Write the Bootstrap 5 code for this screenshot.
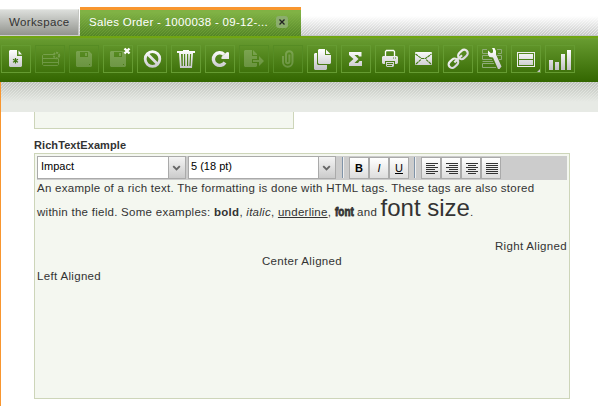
<!DOCTYPE html>
<html lang="en">
<head>
<meta charset="utf-8">
<title>Sales Order</title>
<link href="https://cdn.jsdelivr.net/npm/bootstrap@5.3.0/dist/css/bootstrap.min.css" rel="stylesheet">
<style>
body{font:11.5px/15px "Liberation Sans",Arial,sans-serif;color:#333;background:#fff;height:406px;overflow:hidden}
.tabstrip{height:36px;padding-top:7px;background:linear-gradient(#fff 16px,rgba(255,255,255,.1) 36px),repeating-linear-gradient(135deg,#bfc1bf 0 1px,#dededf 1px 2.12px);border-bottom:1px solid #c2c5c6}
.tab-plain{width:79px;height:27px;margin-top:2px;padding:5px 0 0 9px;background:linear-gradient(#dcdedb,#92948e);border-top:1px solid #e8eae7;border-right:1px solid #c5c7c2;border-bottom:1px solid #ccc;letter-spacing:.37px;color:#333}
.tab-live{width:221px;height:29px;margin-left:1px;padding:5px 0 0 9px;color:#fff;border-top:3px solid #f8962f;background:linear-gradient(rgba(128,178,69,1) 10%,rgba(88,135,40,.55)),repeating-linear-gradient(135deg,#4f8324 0 1px,#76a83c 1px 2.12px);letter-spacing:.29px}
.tab-x{width:12px;height:12px;margin:1px 0 0 8px;background:#8cae6d;border-radius:3px}
.toolstrip{height:46px;padding:7px 0 0 1px;gap:4px;border-top:2px solid #70a512;background:linear-gradient(#70a32f 0,#669a2f 2px,#336600 100%)}
.tool{width:30px;height:28px;border:1px solid #659b31;background:none;padding:0;flex:none;display:block}
.tool svg{display:block}
.off{border-color:#568c24}
.off svg{opacity:.2}
.haze{height:30px;background:linear-gradient(rgba(231,234,229,.1),#e7eae5 20px),repeating-linear-gradient(135deg,#b9bdb6 0 1px,#d9dbd6 1px 2.12px)}
.pane{height:324px;border-left:1px solid #f8962f}
.main{padding-left:33px}
.upper{width:260px;height:17px;border:1px solid #cdd5b9;border-top:0;background:#f4f7f0}
.lbl{font-size:11px;font-weight:bold;line-height:14px;margin-top:9px;height:15px;letter-spacing:.08px}
.editor{width:536px;height:246px;border:1px solid #cdd5b9;background:#f4f7f0;padding:2px}
.fmt{height:24px;margin-bottom:1px;background:#ccc;color:#000;font-size:11px}
.pick{height:23px;border:1px solid #aaa;background:#fff;padding-left:3px;line-height:19px}
.pick svg{background:linear-gradient(#f4f4f4,#cbcbcb);border-left:1px solid #aaa}
.pick-font{width:149px}
.pick-size{width:148px;margin-left:2px;padding-left:2px}
.bar-sep{width:2px;height:21px;margin:1px 5px 0;background:linear-gradient(90deg,#7f93a8 50%,#eee 50%)}
.pick-size + .bar-sep{margin-left:6px}
.fb{width:20px;height:22px;border:1px solid #aaa;background:linear-gradient(#fff,#ddd);padding:0;font-size:11px;line-height:20px;text-align:center;color:#000;margin-top:1px}
.l1{height:15px;line-height:15px;letter-spacing:.275px}
.l2{height:28px;line-height:23px;letter-spacing:.27px}
.place{letter-spacing:.33px}
.big{font-size:24px;letter-spacing:0}
.imp{display:inline-block;font-size:12px;font-weight:bold;transform:scaleX(.83);transform-origin:0 50%;width:19px;letter-spacing:0;-webkit-text-stroke:.8px #333}
</style>
<script src="https://cdn.jsdelivr.net/npm/bootstrap@5.3.0/dist/js/bootstrap.bundle.min.js"></script>
</head>
<body>
<svg width="0" height="0" class="position-absolute"><defs><linearGradient id="g" gradientUnits="userSpaceOnUse" x1="0" y1="5" x2="0" y2="24"><stop stop-color="#fff"/><stop offset="1" stop-color="#c4c4c8"/></linearGradient></defs></svg>
<header class="tabstrip d-flex text-nowrap">
<div class="tab-plain">Workspace</div>
<div class="tab-live d-flex"><span class="tabname">Sales Order - 1000038 - 09-12-...</span><svg class="tab-x" viewBox="0 0 12 12"><path d="M3.500 3.500l5 5m0-5l-5 5" stroke="#222" stroke-width="1.300"/></svg></div>
</header>
<nav class="toolstrip d-flex">
<button class="tool"><svg width="28" height="26" viewBox="1 1 28 26"><path d="M9 5h7v6h5v10l-1 1H9l-1-1V6zM17.500 5.500L21 9.500h-3.500z" fill="url(#g)"/><path d="M14.500 13v5.500M12 14.300l5 3M17 14.300l-5 3" stroke="#3f7610" stroke-width="1.200"/></svg></button>
<button class="tool off"><svg width="28" height="26" viewBox="1 1 28 26" fill="none" stroke="#fff"><path d="M19 9.500H8.500L7.500 10.500v9l1 1h14l1-1V14M7.500 13.500h16M7.500 17.500h16"/><circle cx="21.500" cy="10.500" r="2.700" stroke-dasharray="2 1" stroke-width="2"/></svg></button>
<button class="tool off"><svg width="28" height="26" viewBox="1 1 28 26"><path fill-rule="evenodd" d="M8 6h12l3 3v12l-1 1H8l-1-1V7zM11 7v5h8V7zM16 8h2v3h-2zM20 19v1h1v-1z" fill="#fff"/></svg></button>
<button class="tool"><svg width="28" height="26" viewBox="1 1 28 26"><path fill-rule="evenodd" opacity=".22" d="M8 6h12l3 3v12l-1 1H8l-1-1V7zM11 7v5h8V7zM16 8h2v3h-2zM20 19v1h1v-1z" fill="#fff"/><path d="M21.500 3.500l5 5m0-5l-5 5" stroke="#fff" stroke-width="2.400"/></svg></button>
<button class="tool"><svg width="28" height="26" viewBox="1 1 28 26" fill="none" stroke="url(#g)" stroke-width="2.800"><circle cx="15.500" cy="14" r="7.300"/><path d="M10.500 9l10 10"/></svg></button>
<button class="tool"><svg width="28" height="26" viewBox="1 1 28 26"><path fill-rule="evenodd" fill="url(#g)" d="M6 6h6V5h6v1h6v2h-2l-1 15H9L8 8H6zM10 9l.6 12h1.200V9zM13 9v12h1.200V9zM16 9v12h1.200V9zM19 9l-.6 12h1.200L20.200 9z"/></svg></button>
<button class="tool"><svg width="28" height="26" viewBox="1 1 28 26"><path d="M20 17.500a6.300 6.300 0 1 1-1-8" fill="none" stroke="url(#g)" stroke-width="3.400"/><path d="M16.500 14v-2l2-2 3.500-3 2 .5V14z" fill="url(#g)"/></svg></button>
<button class="tool off"><svg width="28" height="26" viewBox="1 1 28 26"><path d="M6 5h7v6h5v3h-5v4h5v3l-1 1H6l-1-1V6zM14 5l4 4v1h-4zM14 15h6v-4l5 5-5 5v-4h-6z" fill="#fff"/></svg></button>
<button class="tool off"><svg width="28" height="26" viewBox="1 1 28 26" fill="none" stroke="#fff" stroke-width="2"><path d="M10 11v6a4.700 4.700 0 0 0 9.500 0V9a3.300 3.300 0 0 0-6.500 0v7.500a1.700 1.700 0 0 0 3.400 0V9.500"/></svg></button>
<button class="tool"><svg width="28" height="26" viewBox="1 1 28 26"><path d="M12 4h6v6h6v8l-1 1H12l-1-1V5zM19 4.500l4.500 4.500H19zM7 9l1-1h2v11l1 1h9v4l-1 1H8l-1-1z" fill="url(#g)"/></svg></button>
<button class="tool"><svg width="28" height="26" viewBox="1 1 28 26"><path d="M8 7h12.500v4.500H18l-1-1.500h-3.500l4 4-4 4H17l1.500-2H21v5H8v-3l4.500-4L8 10z" fill="url(#g)"/></svg></button>
<button class="tool"><svg width="28" height="26" viewBox="1 1 28 26"><path d="M10.500 11V6.500l1-1h7l1 1V11" fill="none" stroke="#fff" stroke-width="1.300"/><path fill-rule="evenodd" d="M8 11h14l1 1v6l-1 1h-2v-3H10v3H8l-1-1v-6zM18 12.500v1h1v-1zM20 12.500v1h1v-1zM11 17h8v4l-1 1h-6l-1-1zM12 18v1h6v-1zM12 20v1h5v-1z" fill="url(#g)"/></svg></button>
<button class="tool"><svg width="28" height="26" viewBox="1 1 28 26"><rect x="6" y="7" width="17" height="13" rx="1" fill="url(#g)"/><path d="M6.500 9l6 4.500h4l6-4.500M7 19l5-4.500M22 19l-5-4.500" fill="none" stroke="#477d16" stroke-width="1.100" stroke-dasharray="3 .5"/></svg></button>
<button class="tool"><svg width="28" height="26" viewBox="1 1 28 26" fill="none" stroke="url(#g)" stroke-width="2.200"><g transform="rotate(-43 15 14)"><rect x="3.500" y="10.500" width="10.500" height="7" rx="3.500"/><rect x="16.500" y="10.500" width="10.500" height="7" rx="3.500"/><path d="M10 14h10.500"/></g></svg></button>
<button class="tool"><svg width="28" height="26" viewBox="1 1 28 26"><path d="M10 4.500H5.500v4H11M20 4.500h4.500v4H21M13 10.500H5.500v4H15M20 10.500h4.500v4H22M16 16.500H5.500M17 18.500H5.500v4H19" fill="none" stroke="#8fab78" stroke-width="1"/><path d="M15 3h2.500l1.500 3v3.500l5.500 12L22.500 24H21L16 12.500l-3.500-.5L11 9.500V5.500l3 2.700 2-.7V5z" fill="url(#g)"/></svg></button>
<button class="tool"><svg width="28" height="26" viewBox="1 1 28 26"><rect x="6.500" y="7.500" width="17" height="14" fill="none" stroke="#eee"/><path d="M8 9h14v5H8zM8 15h14v5H8zM26 27l3-3v3z" fill="url(#g)"/></svg></button>
<button class="tool"><svg width="28" height="26" viewBox="1 1 28 26"><path d="M4 15h4v10H4zM10 17h4v8h-4zM16 9h4v16h-4zM22 5h4v20h-4z" fill="url(#g)"/></svg></button>
</nav>
<section class="pane">
<div class="haze"></div>
<main class="main">
<div class="upper"></div>
<div class="lbl">RichTextExample</div>
<div class="editor">
<div class="fmt d-flex">
<div class="pick pick-font d-flex justify-content-between"><span>Impact</span><svg width="17" height="21" viewBox="0 0 17 21"><path d="M4.500 9l3.500 3.500L11.500 9" fill="none" stroke="#666" stroke-width="2"/></svg></div>
<div class="pick pick-size d-flex justify-content-between"><span>5 (18 pt)</span><svg width="17" height="21" viewBox="0 0 17 21"><path d="M4.500 9l3.500 3.500L11.500 9" fill="none" stroke="#666" stroke-width="2"/></svg></div>
<div class="bar-sep"></div>
<button class="fb"><b>B</b></button><button class="fb"><i>I</i></button><button class="fb"><u>U</u></button>
<div class="bar-sep"></div>
<button class="fb"><svg class="d-block" width="18" height="20"><path d="M4 5.500h12M4 7.500h9M4 9.500h12M4 11.500h9M4 13.500h12M4 15.500h9" stroke="#333"/></svg></button><button class="fb"><svg class="d-block" width="18" height="20"><path d="M4 5.500h12M7 7.500h9M4 9.500h12M7 11.500h9M4 13.500h12M7 15.500h9" stroke="#333"/></svg></button><button class="fb"><svg class="d-block" width="18" height="20"><path d="M4 5.500h12M6 7.500h8M4 9.500h12M6 11.500h8M4 13.500h12M6 15.500h8" stroke="#333"/></svg></button><button class="fb"><svg class="d-block" width="18" height="20"><path d="M4 5.500h12M4 7.500h12M4 9.500h12M4 11.500h12M4 13.500h12M4 15.500h12" stroke="#333"/></svg></button>
</div>
<div class="text-nowrap">
<div class="l1">An example of a rich text. The formatting is done with HTML tags. These tags are also stored</div>
<div class="l2">within the field. Some examples: <b>bold</b>, <i>italic</i>, <u>underline</u>, <span class="imp">font</span> and <span class="big">font size</span>.</div>
<div class="l1">&nbsp;</div>
<div class="l1 place text-end">Right Aligned</div>
<div class="l1 place text-center">Center Aligned</div>
<div class="l1 place">Left Aligned</div>
</div>
</div>
</main>
</section>
</body>
</html>
